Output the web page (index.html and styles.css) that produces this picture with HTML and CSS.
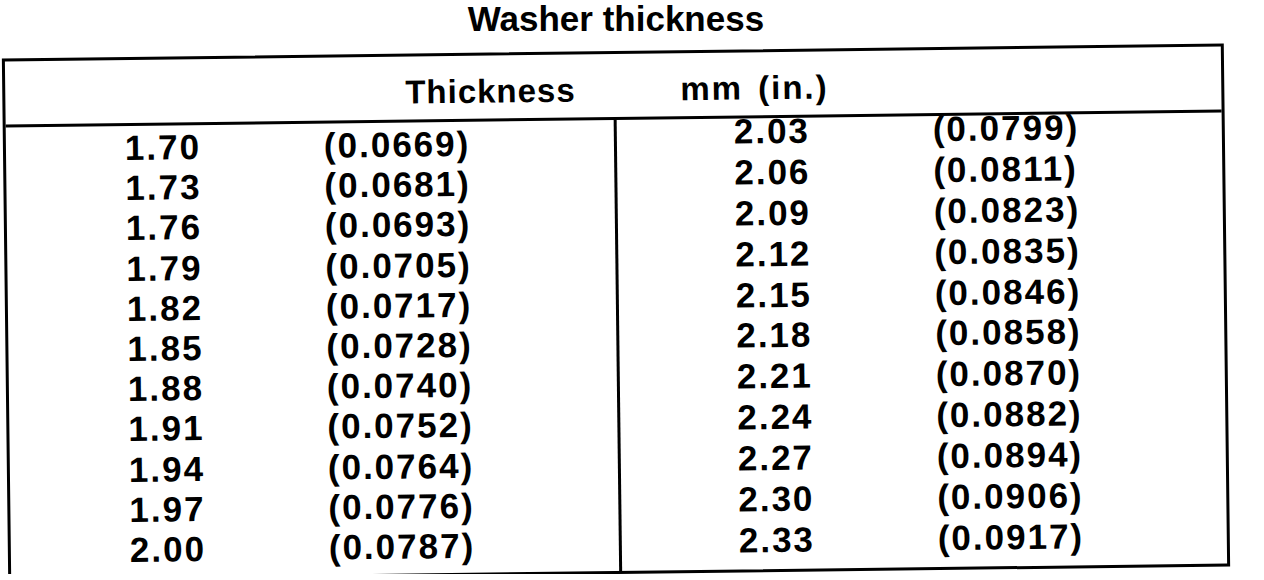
FILE: index.html
```html
<!DOCTYPE html>
<html lang="en">
<head>
    <meta charset="UTF-8">
    <meta name="viewport" content="width=device-width, initial-scale=1.0">
    <title>Washer thickness</title>
    <link rel="stylesheet" href="styles.css">
</head>
<body>
    <div class="sheet">
        <h1 class="title">Washer thickness</h1>

        <!-- scanned table, slightly tilted like the original page -->
        <div class="table">
            <div class="table-head">
                <span></span>
                <span class="head-thick">Thickness</span>
                <span class="head-unit">mm (in.)</span>
            </div>
            <div class="table-body">
                <div class="half half-left">
                    <div class="row"><span class="mm">1.70</span><span class="in">(0.0669)</span></div>
                    <div class="row"><span class="mm">1.73</span><span class="in">(0.0681)</span></div>
                    <div class="row"><span class="mm">1.76</span><span class="in">(0.0693)</span></div>
                    <div class="row"><span class="mm">1.79</span><span class="in">(0.0705)</span></div>
                    <div class="row"><span class="mm">1.82</span><span class="in">(0.0717)</span></div>
                    <div class="row"><span class="mm">1.85</span><span class="in">(0.0728)</span></div>
                    <div class="row"><span class="mm">1.88</span><span class="in">(0.0740)</span></div>
                    <div class="row"><span class="mm">1.91</span><span class="in">(0.0752)</span></div>
                    <div class="row"><span class="mm">1.94</span><span class="in">(0.0764)</span></div>
                    <div class="row"><span class="mm">1.97</span><span class="in">(0.0776)</span></div>
                    <div class="row"><span class="mm">2.00</span><span class="in">(0.0787)</span></div>
                </div>
                <div class="half half-right">
                    <div class="row"><span class="mm">2.03</span><span class="in">(0.0799)</span></div>
                    <div class="row"><span class="mm">2.06</span><span class="in">(0.0811)</span></div>
                    <div class="row"><span class="mm">2.09</span><span class="in">(0.0823)</span></div>
                    <div class="row"><span class="mm">2.12</span><span class="in">(0.0835)</span></div>
                    <div class="row"><span class="mm">2.15</span><span class="in">(0.0846)</span></div>
                    <div class="row"><span class="mm">2.18</span><span class="in">(0.0858)</span></div>
                    <div class="row"><span class="mm">2.21</span><span class="in">(0.0870)</span></div>
                    <div class="row"><span class="mm">2.24</span><span class="in">(0.0882)</span></div>
                    <div class="row"><span class="mm">2.27</span><span class="in">(0.0894)</span></div>
                    <div class="row"><span class="mm">2.30</span><span class="in">(0.0906)</span></div>
                    <div class="row"><span class="mm">2.33</span><span class="in">(0.0917)</span></div>
                </div>
            </div>
        </div>
    </div>
</body>
</html>
```

FILE: styles.css
```css
body {
    margin: 0;
    background: #fff;
    color: #000;
    font-family: "Liberation Sans", Arial, sans-serif;
    font-weight: bold;
}

.sheet {
    width: 1222px;
    padding-left: 5px;
}

.title {
    margin: 0;
    height: 51px;
    font-size: 35px;
    line-height: 38px;
    font-weight: bold;
    text-align: center;
}

.table {
    box-sizing: border-box;
    width: 1222px;
    height: 523px;
    border: 3px solid #000;
    display: flex;
    flex-direction: column;
    transform: rotate(-0.7deg); /* the scan is a bit crooked */
    transform-origin: 50% 50%;
}

.table-head {
    box-sizing: border-box;
    height: 66px;
    padding-top: 19px;
    border-bottom: 3px solid #000;
    display: grid;
    grid-template-columns: 400px 275px 1fr;
    font-size: 33px;
    line-height: 33px;
    letter-spacing: 1px;
}

.head-unit {
    letter-spacing: 2px;
    word-spacing: 4px;
}

.table-body {
    flex: 1;
    display: grid;
    grid-template-columns: 608px 1fr;
}

.half {
    display: flex;
    flex-direction: column;
}

.half-left {
    padding: 9px 0 0 119px;
    gap: 14.2px;
}

.half-right {
    border-left: 3px solid #000;
    padding: 0 0 0 117px;
    gap: 14.9px;
}

.row {
    display: flex;
    font-size: 35px;
    line-height: 26px;
    letter-spacing: 2px;
}

.mm {
    width: 199px;
}
```
